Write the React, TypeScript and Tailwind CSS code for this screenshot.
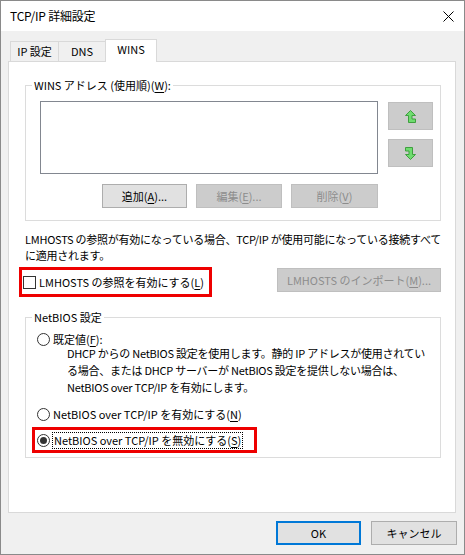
import React from 'react';

const font = "font-['Noto_Sans_CJK_JP',sans-serif]";

function Key({ k }: { k: string }) {
  return <span className="underline underline-offset-[2px]">{k}</span>;
}

function Btn({
  children,
  disabled,
  className = '',
}: {
  children: React.ReactNode;
  disabled?: boolean;
  className?: string;
}) {
  return (
    <div
      className={`flex items-center justify-center border text-[11px] leading-none ${
        disabled
          ? 'bg-[#cccccc] border-[#bfbfbf] text-[#8c8c8c]'
          : 'bg-[#e1e1e1] border-[#adadad] text-black'
      } ${className}`}
    >
      {children}
    </div>
  );
}

function Radio({ checked }: { checked?: boolean }) {
  return (
    <div className="w-[13px] h-[13px] rounded-full border border-[#333] bg-white flex items-center justify-center shrink-0">
      {checked && <div className="w-[7px] h-[7px] rounded-full bg-[#333]" />}
    </div>
  );
}

function GroupBox({
  label,
  className = '',
  children,
}: {
  label: React.ReactNode;
  className?: string;
  children: React.ReactNode;
}) {
  return (
    <div className={`relative border border-[#dcdcdc] ${className}`}>
      <span className="absolute -top-[9px] left-[6px] bg-white px-[2px] text-[11px] leading-[16px]">
        {label}
      </span>
      {children}
    </div>
  );
}

function UpIcon() {
  return (
    <svg width="11" height="13" viewBox="0 0 11 13">
      <path
        d="M5.5 0.5 L10.5 5.5 L7 5.5 L7 9 L10.5 9 L10.5 12.5 L3.5 12.5 L3.5 5.5 L0.5 5.5 Z"
        fill="#6fdc6f"
        stroke="#3f9f3f"
        strokeWidth="1"
      />
    </svg>
  );
}

function DownIcon() {
  return (
    <svg width="11" height="13" viewBox="0 0 11 13">
      <path
        d="M5.5 12.5 L0.5 7.5 L4 7.5 L4 4 L0.5 4 L0.5 0.5 L7.5 0.5 L7.5 7.5 L10.5 7.5 Z"
        fill="#6fdc6f"
        stroke="#3f9f3f"
        strokeWidth="1"
      />
    </svg>
  );
}

export default function App() {
  return (
    <div
      className={`w-[465px] h-[555px] border border-[#8a8a8a] bg-[#f0f0f0] flex flex-col text-black text-[11px] ${font}`}
    >
      {/* title bar */}
      <div className="h-[30px] bg-white flex items-center justify-between pl-[9px] pr-[9px] shrink-0">
        <span className="text-[12px] leading-none tracking-[-0.2px]">TCP/IP 詳細設定</span>
        <svg width="11" height="11" viewBox="0 0 11 11" className="mr-[1px]">
          <path d="M0.5 0.5 L10.5 10.5 M10.5 0.5 L0.5 10.5" stroke="#000" strokeWidth="1" />
        </svg>
      </div>

      <div className="pt-[8px] pl-[7px] flex flex-col">
        {/* tabs */}
        <div className="flex items-end h-[22px] pl-[2px]">
          <div className="w-[49px] h-[20px] border border-b-0 border-[#d9d9d9] bg-[#f0f0f0] flex items-center justify-center leading-none">
            IP 設定
          </div>
          <div className="w-[48px] h-[20px] -ml-px border border-b-0 border-[#d9d9d9] bg-[#f0f0f0] flex items-center justify-center leading-none">
            DNS
          </div>
          <div className="w-[52px] h-[23px] -ml-px -mb-px relative z-10 border border-b-0 border-[#d9d9d9] bg-white flex items-center justify-center pb-[4px] leading-none">
            WINS
          </div>
        </div>

        {/* tab panel */}
        <div className="w-[448px] h-[452px] bg-white border border-[#d9d9d9] pl-[16px] pt-[23px] flex flex-col">
          <GroupBox label={<>WINS アドレス (使用順)(<Key k="W" />):</>} className="w-[416px] h-[136px] pl-[14px] pt-[15px]">
            <div className="flex">
              <div className="w-[338px] h-[73px] border border-[#828790] bg-white" />
              <div className="ml-[10px] mt-[1px] flex flex-col gap-[9px]">
                <Btn disabled className="w-[45px] h-[28px]">
                  <UpIcon />
                </Btn>
                <Btn disabled className="w-[45px] h-[28px]">
                  <DownIcon />
                </Btn>
              </div>
            </div>
            <div className="w-[338px] mt-[10px] flex justify-end gap-[9px]">
              <Btn className="w-[85px] h-[24px]">
                追加(<Key k="A" />)...
              </Btn>
              <Btn disabled className="w-[86px] h-[24px]">
                編集(<Key k="E" />)...
              </Btn>
              <Btn disabled className="w-[87px] h-[24px]">
                削除(<Key k="V" />)
              </Btn>
            </div>
          </GroupBox>

          <div className="mt-[10px] leading-[16px] whitespace-nowrap tracking-[-0.25px]">
            LMHOSTS の参照が有効になっている場合、TCP/IP が使用可能になっている接続すべて
            <br />
            に適用されます。
          </div>

          <div className="mt-[4px] w-[416px] flex items-center justify-between">
            <div className="-ml-[6px] w-[193px] h-[30px] border-[3px] border-[#ee0000] flex items-center pl-[1px]">
              <div className="w-[13px] h-[13px] border border-[#333] bg-white shrink-0" />
              <span className="ml-[3px] whitespace-nowrap leading-none">
                LMHOSTS の参照を有効にする(<Key k="L" />)
              </span>
            </div>
            <Btn disabled className="w-[164px] h-[24px] -mt-[4px]">
              LMHOSTS のインポート(<Key k="M" />)...
            </Btn>
          </div>

          <GroupBox label="NetBIOS 設定" className="mt-[20px] w-[416px] h-[141px] pl-[11px] pt-[13px]">
            <div className="flex items-center h-[16px] gap-[3px]">
              <Radio />
              <span className="leading-none">
                既定値(<Key k="F" />):
              </span>
            </div>
            <div className="-mt-[2px] pl-[30px] leading-[17px] whitespace-nowrap tracking-[-0.25px]">
              DHCP からの NetBIOS 設定を使用します。静的 IP アドレスが使用されてい
              <br />
              る場合、または DHCP サーバーが NetBIOS 設定を提供しない場合は、
              <br />
              NetBIOS over TCP/IP を有効にします。
            </div>
            <div className="mt-[10px] flex items-center h-[16px] gap-[3px]">
              <Radio />
              <span className="leading-none">
                NetBIOS over TCP/IP を有効にする(<Key k="N" />)
              </span>
            </div>
            <div className="mt-[5px] -ml-[5px] w-[225px] h-[26px] border-[3px] border-[#ee0000] flex items-center pl-[2px] gap-[3px]">
              <Radio checked />
              <span className="leading-[15px] px-[1px] outline outline-1 outline-dotted outline-black">
                NetBIOS over TCP/IP を無効にする(<Key k="S" />)
              </span>
            </div>
          </GroupBox>
        </div>

        {/* dialog buttons */}
        <div className="mt-[8px] pr-[7px] flex justify-end gap-[10px]">
          <div className="w-[85px] h-[24px] border-2 border-[#0078d7] bg-[#e1e1e1] flex items-center justify-center leading-none">
            OK
          </div>
          <Btn className="w-[86px] h-[24px]">キャンセル</Btn>
        </div>
      </div>
    </div>
  );
}
